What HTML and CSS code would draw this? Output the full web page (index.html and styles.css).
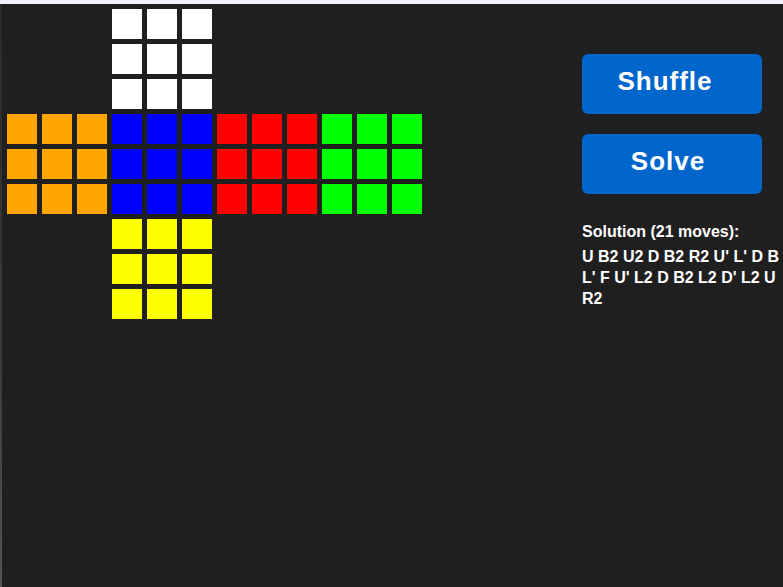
FILE: index.html
```html
<!DOCTYPE html>
<html>
<head>
<meta charset="utf-8">
<link rel="stylesheet" href="styles.css">
</head>
<body>
<div class="topbar"></div>
<div class="window">
  <div class="edge"></div>
  <div class="cube">
    <div class="face f-u"><i class="w"></i><i class="w"></i><i class="w"></i><i class="w"></i><i class="w"></i><i class="w"></i><i class="w"></i><i class="w"></i><i class="w"></i></div>
    <div class="face f-l"><i class="o"></i><i class="o"></i><i class="o"></i><i class="o"></i><i class="o"></i><i class="o"></i><i class="o"></i><i class="o"></i><i class="o"></i></div>
    <div class="face f-f"><i class="b"></i><i class="b"></i><i class="b"></i><i class="b"></i><i class="b"></i><i class="b"></i><i class="b"></i><i class="b"></i><i class="b"></i></div>
    <div class="face f-r"><i class="r"></i><i class="r"></i><i class="r"></i><i class="r"></i><i class="r"></i><i class="r"></i><i class="r"></i><i class="r"></i><i class="r"></i></div>
    <div class="face f-b"><i class="g"></i><i class="g"></i><i class="g"></i><i class="g"></i><i class="g"></i><i class="g"></i><i class="g"></i><i class="g"></i><i class="g"></i></div>
    <div class="face f-d"><i class="y"></i><i class="y"></i><i class="y"></i><i class="y"></i><i class="y"></i><i class="y"></i><i class="y"></i><i class="y"></i><i class="y"></i></div>
  </div>
  <div class="panel">
    <button class="btn shuffle">Shuffle</button>
    <button class="btn solve">Solve</button>
    <div class="solution">
      <div class="sol-title">Solution (21 moves):</div>
      <div class="sol-moves">U B2 U2 D B2 R2 U' L' D B L' F U' L2 D B2 L2 D' L2 U R2</div>
    </div>
  </div>
</div>
</body>
</html>
```
FILE: styles.css
```css
html, body {
  margin: 0;
  padding: 0;
  background: #1f1f1f;
  width: 783px;
  height: 587px;
  overflow: hidden;
  font-family: "Liberation Sans", Arial, sans-serif;
}
.topbar {
  height: 4px;
  background: #f6f0f8;
}
.window {
  display: flex;
  height: 583px;
}
.edge {
  width: 2px;
  flex: none;
  background: linear-gradient(#2a2a2a 0, #3a3a3a 60%, #555 100%);
}
.cube {
  display: grid;
  grid-template-columns: repeat(4, 100px);
  grid-template-rows: repeat(3, 100px);
  gap: 5px;
  padding: 5px;
  align-self: flex-start;
}
.face {
  display: grid;
  grid-template-columns: repeat(3, 30px);
  grid-template-rows: repeat(3, 30px);
  gap: 5px;
}
.f-u { grid-column: 2; grid-row: 1; }
.f-l { grid-column: 1; grid-row: 2; }
.f-f { grid-column: 2; grid-row: 2; }
.f-r { grid-column: 3; grid-row: 2; }
.f-b { grid-column: 4; grid-row: 2; }
.f-d { grid-column: 2; grid-row: 3; }
.face i { display: block; }
.w { background: #ffffff; }
.o { background: #ffa500; }
.b { background: #0000ff; }
.r { background: #ff0000; }
.g { background: #00ff00; }
.y { background: #ffff00; }
.panel {
  margin-left: 155px;
  padding-top: 50px;
  display: flex;
  flex-direction: column;
  width: 201px;
}
.btn {
  width: 180px;
  height: 60px;
  border: none;
  border-radius: 6px;
  background: #0066cc;
  color: #ffffff;
  font-family: "Liberation Sans", Arial, sans-serif;
  font-weight: bold;
  font-size: 26px;
  letter-spacing: 1px;
  padding: 0 0 5px 0;
  margin: 0;
}
.shuffle { padding-right: 14px; }
.solve { margin-top: 20px; padding-right: 8px; }
.solution {
  margin-top: 28px;
  color: #ffffff;
  font-weight: bold;
  font-size: 16px;
}
.sol-title {
  line-height: 20px;
}
.sol-moves {
  margin-top: 4px;
  line-height: 21px;
}
```
